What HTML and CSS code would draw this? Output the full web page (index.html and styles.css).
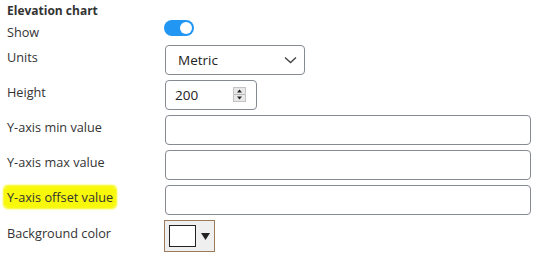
FILE: index.html
```html
<!DOCTYPE html>
<html lang="en">
<head>
  <meta charset="UTF-8">
  <meta name="viewport" content="width=device-width, initial-scale=1.0">
  <title>Elevation chart</title>
  <link rel="stylesheet" href="styles.css">
</head>
<body>
  <div class="panel">
    <h3 class="title">Elevation chart</h3>

    <div class="row row-toggle">
      <label class="label">Show</label>
      <span class="toggle"><span class="knob"></span></span>
    </div>

    <div class="row">
      <label class="label">Units</label>
      <div class="select">
        <span>Metric</span>
        <svg class="chevron" width="13" height="8" viewBox="0 0 13 8">
          <path d="M1 1.5 L6.5 6.5 L12 1.5" fill="none" stroke="#444" stroke-width="1.4"/>
        </svg>
      </div>
    </div>

    <div class="row">
      <label class="label">Height</label>
      <div class="number">
        <span>200</span>
        <span class="spin">
          <svg width="13" height="15" viewBox="0 0 13 15">
            <rect x="0.5" y="0.5" width="12" height="14" fill="#e8e8e8" stroke="#c4c4c4"/>
            <line x1="1" y1="7.5" x2="12" y2="7.5" stroke="#b8b8b8"/>
            <path d="M4 5.5 L6.5 2.5 L9 5.5 Z" fill="#222"/>
            <path d="M4 9.5 L6.5 12.5 L9 9.5 Z" fill="#222"/>
          </svg>
        </span>
      </div>
    </div>

    <div class="row">
      <label class="label">Y-axis min value</label>
      <input class="text" type="text">
    </div>

    <div class="row">
      <label class="label">Y-axis max value</label>
      <input class="text" type="text">
    </div>

    <div class="row">
      <label class="label"><span class="marker">Y-axis offset value</span></label>
      <input class="text" type="text">
    </div>

    <div class="row">
      <label class="label label-color">Background color</label>
      <div class="color">
        <span class="swatch"></span>
        <svg width="9" height="7" viewBox="0 0 9 7"><path d="M0 0 H9 L4.5 7 Z" fill="#222"/></svg>
      </div>
    </div>
  </div>
</body>
</html>
```

FILE: styles.css
```css
body {
  margin: 0;
  background: #fff;
  font-family: "Open Sans", "Noto Sans", sans-serif;
  font-size: 12.7px;
  color: #333;
}
.panel {
  padding: 3px 8px 0 7px;
  display: flex;
  flex-direction: column;
  gap: 5px;
}
.title {
  margin: 0 0 -4px;
  font-size: 12px;
  font-weight: bold;
  line-height: 16px;
}
.row {
  display: flex;
  align-items: flex-start;
}
.row-toggle {
  height: 20px;
}
.label {
  width: 158px;
  flex: none;
  padding-top: 4px;
  line-height: 16px;
}
.label-color {
  padding-top: 5px;
}
.marker {
  background: #f8f80a;
  box-shadow: 0 0 2px 2px #f8f80a;
  border-radius: 3px;
  padding: 1px 2px;
  margin-left: -2px;
}
.toggle {
  width: 30px;
  height: 16px;
  margin-left: -1px;
  border-radius: 8px;
  background: #2196f3;
  display: flex;
  align-items: center;
  justify-content: flex-end;
  padding-right: 2px;
  box-sizing: border-box;
}
.knob {
  width: 12px;
  height: 12px;
  border-radius: 50%;
  background: #fff;
}
.select, .number, .text {
  box-sizing: border-box;
  height: 30px;
  border: 1px solid #868b93;
  border-radius: 4px;
  background: #fff;
}
.select {
  width: 140px;
  display: flex;
  align-items: center;
  justify-content: space-between;
  padding: 0 7px 0 12px;
  font-size: 13.5px;
  color: #222;
}
.number {
  width: 92px;
  display: flex;
  align-items: center;
  justify-content: space-between;
  padding: 0 10px 0 9px;
  font-size: 13.5px;
  color: #222;
}
.spin {
  display: flex;
  margin-top: -1px;
}
.text {
  flex: 1;
  font: inherit;
  padding: 0 8px;
}
.color {
  box-sizing: border-box;
  width: 51px;
  height: 32px;
  margin-left: -1px;
  border: 1px solid #9c7a5a;
  background: #efefef;
  display: flex;
  align-items: center;
  gap: 5px;
  padding-left: 4px;
}
.swatch {
  box-sizing: border-box;
  width: 27px;
  height: 22px;
  border: 1px solid #222;
  background: #fff;
}
```
